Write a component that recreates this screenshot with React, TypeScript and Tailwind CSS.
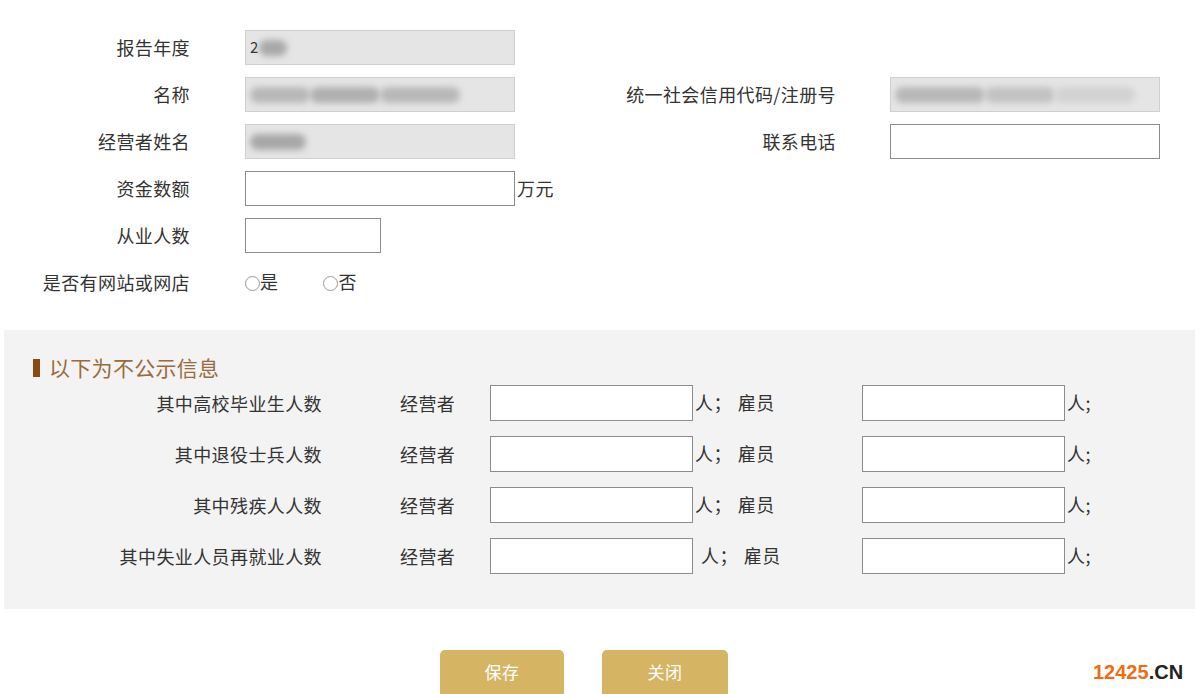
import React from "react";

function Blur({ w, shade = "bg-[#b8b8b8]" }: { w: string; shade?: string }) {
  return <div className={`${w} h-[16px] ${shade} rounded-full blur-[3px]`} />;
}

function ReadOnlyBox({ children }: { children?: React.ReactNode }) {
  return (
    <div className="w-[270px] h-[35px] bg-[#e5e5e5] border border-[#cfcfcf] flex items-center px-[4px] overflow-hidden">
      {children}
    </div>
  );
}

function Box({ w }: { w: string }) {
  return <div className={`${w} h-[35px] bg-white border border-[#8c8c8c]`} />;
}

function Radio({ label }: { label: string }) {
  return (
    <div className="flex items-end">
      <span className="block shrink-0 w-[15px] h-[15px] mb-[2px] rounded-full border-[1.5px] border-[#999] bg-white" />
      <span className="leading-[24px]">{label}</span>
    </div>
  );
}

export default function App() {
  const hidden = ["其中高校毕业生人数", "其中退役士兵人数", "其中残疾人人数", "其中失业人员再就业人数"];

  return (
    <div className="relative w-[1199px] h-[694px] overflow-hidden bg-white text-[#333] text-[18px] tracking-[0.4px] font-['Microsoft_YaHei','Noto_Sans_CJK_SC',sans-serif]">
      {/* public info */}
      <div className="pt-[30px] flex flex-col gap-y-[12px]">
        <div className="flex items-center h-[35px]">
          <div className="w-[190px] text-right">报告年度</div>
          <div className="ml-[55px]">
            <ReadOnlyBox>
              <span className="text-[15px]">2</span>
              <Blur w="w-[28px]" shade="bg-[#a9a9a9]" />
            </ReadOnlyBox>
          </div>
        </div>

        <div className="flex items-center h-[35px]">
          <div className="w-[190px] text-right">名称</div>
          <div className="ml-[55px]">
            <ReadOnlyBox>
              <div className="flex items-center">
                <Blur w="w-[60px]" />
                <Blur w="w-[70px]" shade="bg-[#b0b0b0]" />
                <Blur w="w-[80px]" />
              </div>
            </ReadOnlyBox>
          </div>
          <div className="w-[321px] text-right">统一社会信用代码/注册号</div>
          <div className="ml-[54px]">
            <ReadOnlyBox>
              <div className="flex items-center">
                <Blur w="w-[90px]" />
                <Blur w="w-[70px]" shade="bg-[#c2c2c2]" />
                <Blur w="w-[80px]" shade="bg-[#d2d2d2]" />
              </div>
            </ReadOnlyBox>
          </div>
        </div>

        <div className="flex items-center h-[35px]">
          <div className="w-[190px] text-right">经营者姓名</div>
          <div className="ml-[55px]">
            <ReadOnlyBox>
              <Blur w="w-[56px]" shade="bg-[#a8a8a8]" />
            </ReadOnlyBox>
          </div>
          <div className="w-[321px] text-right">联系电话</div>
          <div className="ml-[54px]">
            <Box w="w-[270px]" />
          </div>
        </div>

        <div className="flex items-center h-[35px]">
          <div className="w-[190px] text-right">资金数额</div>
          <div className="ml-[55px] flex items-center">
            <Box w="w-[270px]" />
            <span className="ml-[2px]">万元</span>
          </div>
        </div>

        <div className="flex items-center h-[35px]">
          <div className="w-[190px] text-right">从业人数</div>
          <div className="ml-[55px]">
            <Box w="w-[136px]" />
          </div>
        </div>

        <div className="flex items-center h-[35px]">
          <div className="w-[190px] text-right">是否有网站或网店</div>
          <div className="ml-[55px] flex items-end gap-x-[45px] -mt-[4px]">
            <Radio label="是" />
            <Radio label="否" />
          </div>
        </div>
      </div>

      {/* non-public info */}
      <div className="mt-[30px] mx-[4px] w-[1191px] bg-[#f3f3f3] pt-[25px] pb-[35px]">
        <div className="flex items-center h-[26px] pl-[29px]">
          <span className="w-[7px] h-[18px] bg-[#8a4a12]" />
          <span className="ml-[9px] text-[#9b6b3c] text-[21px] tracking-[0.3px]">以下为不公示信息</span>
        </div>
        <div className="mt-[4px] flex flex-col gap-y-[15px]">
          {hidden.map((label, i) => (
            <div key={label} className="flex items-center h-[36px]">
              <div className="w-[318px] text-right">{label}</div>
              <div className="ml-[78px] w-[56px]">经营者</div>
              <div className="ml-[34px]">
                <div className="w-[203px] h-[36px] bg-white border border-[#8c8c8c]" />
              </div>
              <div className={`w-[169px] flex items-center -mt-[2px] ${i === 3 ? "pl-[8px]" : "pl-[2px]"}`}>
                <span>人；</span>
                <span className="ml-[6px]">雇员</span>
              </div>
              <div className="w-[203px] h-[36px] bg-white border border-[#8c8c8c]" />
              <span className="ml-[2px] -mt-[2px]">人;</span>
            </div>
          ))}
        </div>
      </div>

      {/* actions */}
      <div className="mt-[41px] flex pl-[440px] gap-x-[38px]">
        <button className="w-[124px] h-[44px] rounded-t-[5px] bg-[#d5b464] text-white text-[17px]">保存</button>
        <button className="w-[126px] h-[44px] rounded-t-[5px] bg-[#d5b464] text-white text-[17px]">关闭</button>
      </div>

      {/* watermark */}
      <div className="absolute left-[1093px] top-[657px] text-[20px] font-bold tracking-normal font-['Liberation_Sans',Arial,sans-serif]">
        <span className="text-[#f26b10]">12425</span>
        <span className="text-[#222]">.CN</span>
      </div>
    </div>
  );
}
